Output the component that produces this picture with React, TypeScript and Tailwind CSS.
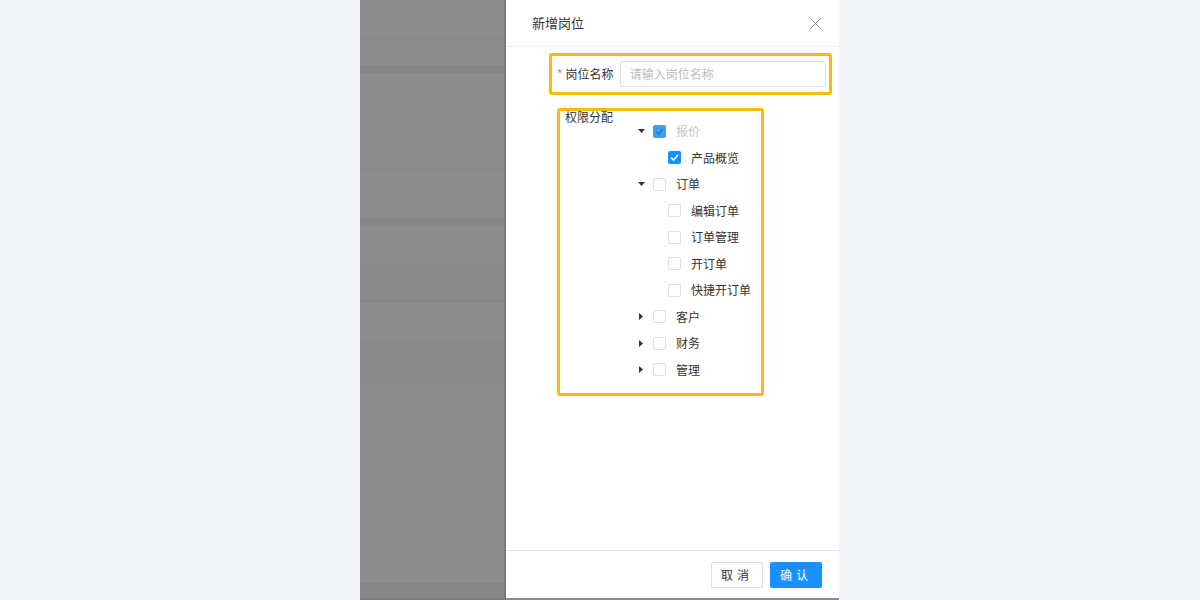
import { X } from "lucide-react";

type Node = {
  label: string;
  level: number;
  caret?: "down" | "right";
  checked?: boolean;
  disabled?: boolean;
};

const nodes: Node[] = [
  { label: "报价", level: 0, caret: "down", checked: true, disabled: true },
  { label: "产品概览", level: 1, checked: true },
  { label: "订单", level: 0, caret: "down" },
  { label: "编辑订单", level: 1 },
  { label: "订单管理", level: 1 },
  { label: "开订单", level: 1 },
  { label: "快捷开订单", level: 1 },
  { label: "客户", level: 0, caret: "right" },
  { label: "财务", level: 0, caret: "right" },
  { label: "管理", level: 0, caret: "right" },
];

function Caret({ dir }: { dir: "down" | "right" }) {
  if (dir === "down") {
    return (
      <svg width="7" height="4" viewBox="0 0 7 4">
        <path d="M0 0 L7 0 L3.5 4 Z" fill="#333" />
      </svg>
    );
  }
  return (
    <svg width="4" height="7" viewBox="0 0 4 7">
      <path d="M0 0 L4 3.5 L0 7 Z" fill="#333" />
    </svg>
  );
}

function Checkbox({ checked, disabled }: { checked?: boolean; disabled?: boolean }) {
  if (checked) {
    return (
      <span
        className={
          "flex h-[13px] w-[13px] items-center justify-center rounded-[2px] " +
          (disabled ? "bg-[#3d9ef7]" : "bg-[#1890ff]")
        }
      >
        <svg width="9" height="7" viewBox="0 0 9 7">
          <path
            d="M1 3.5 L3.5 6 L8 1"
            fill="none"
            stroke={disabled ? "#2b76c4" : "#fff"}
            strokeWidth="1.6"
          />
        </svg>
      </span>
    );
  }
  return <span className="block h-[13px] w-[13px] rounded-[2px] border border-[#dcdfe6] bg-white" />;
}

function TreeRow({ node }: { node: Node }) {
  return (
    <div className="flex h-[26.5px] items-center">
      {node.level === 0 ? (
        <span className="mr-[6px] flex w-[12px] items-center justify-center">
          {node.caret && <Caret dir={node.caret} />}
        </span>
      ) : (
        <span className="w-[33px]" />
      )}
      <Checkbox checked={node.checked} disabled={node.disabled} />
      <span
        className={
          "ml-[10px] text-[12px] leading-none " + (node.disabled ? "text-[#c0c4cc]" : "text-[#333]")
        }
      >
        {node.label}
      </span>
    </div>
  );
}

function GrayPanel() {
  return (
    <div className="flex w-[146px] flex-col border-r-2 border-[#7a7a7a] bg-[#8c8c8c]">
      <div className="h-[38px]" />
      <div className="h-px bg-[#858585]" />
      <div className="h-[26px]" />
      <div className="h-[8px] bg-[#858688]" />
      <div className="h-[96px]" />
      <div className="h-px bg-[#868686]" />
      <div className="h-[48px]" />
      <div className="h-[8px] bg-[#858688]" />
      <div className="h-[37px]" />
      <div className="h-[38px] bg-[#898989]" />
      <div className="h-px bg-[#858585]" />
      <div className="h-[40px]" />
      <div className="h-[41px] bg-[#898989]" />
      <div className="flex-1" />
      <div className="h-[15px] bg-[#858688]" />
      <div className="h-[2px] bg-[#7c7c7c]" />
    </div>
  );
}

export default function App() {
  return (
    <div
      className="flex h-[600px] w-[1200px] bg-[#f4f5f9]"
      style={{ fontFamily: '"Noto Sans CJK SC", "Liberation Sans", sans-serif' }}
    >
      <div className="w-[360px]" />

      <div className="flex w-[480px]">
        <GrayPanel />

        {/* drawer */}
        <div className="flex w-[333px] flex-col bg-white">
          <div className="flex h-[47px] items-center justify-between border-b border-[#ebeef5] pl-[26px] pr-[14px]">
            <span className="text-[13px] text-[#333]">新增岗位</span>
            <X size={19} strokeWidth={1.1} className="text-[#777]" />
          </div>

          <div className="flex-1 pt-[6px]">
            <div className="ml-[43px] flex h-[42px] w-[283px] items-center rounded-[3px] border-[3px] border-[#fbb80f] pl-[5px] pr-[3px]">
              <span className="mr-[3px] text-[12px] text-[#f56c6c]">*</span>
              <span className="text-[12px] text-[#333]">岗位名称</span>
              <div className="ml-[6px] flex h-[26px] flex-1 items-center rounded-[2px] border border-[#dcdfe6] pl-[9px] text-[12px] text-[#bbbbbb]">
                请输入岗位名称
              </div>
            </div>

            <div className="ml-[51px] mt-[13px] flex w-[207px] rounded-[3px] border-[3px] border-[#fbb80f] pb-[10px] pl-[5px]">
              <span className="w-[48px] text-[12px] leading-[12px] text-[#333]">权限分配</span>
              <div className="ml-[22px] pt-[7px]">
                {nodes.map((n) => (
                  <TreeRow key={n.label} node={n} />
                ))}
              </div>
            </div>
          </div>

          <div className="flex h-[48px] items-center justify-end gap-[7px] border-t border-[#e4e4e4] pr-[17px]">
            <button className="h-[26px] w-[52px] rounded-[2px] border border-[#dcdfe6] bg-white text-[12px] tracking-[4px] text-[#333]">
              取消
            </button>
            <button className="h-[26px] w-[52px] rounded-[2px] bg-[#1890ff] text-[12px] tracking-[4px] text-white">
              确认
            </button>
          </div>
          <div className="h-[2px] bg-[#8c8c8c]" />
        </div>
        <div className="w-px bg-[#f4f5f9]" />
      </div>

      <div className="flex-1" />
    </div>
  );
}
